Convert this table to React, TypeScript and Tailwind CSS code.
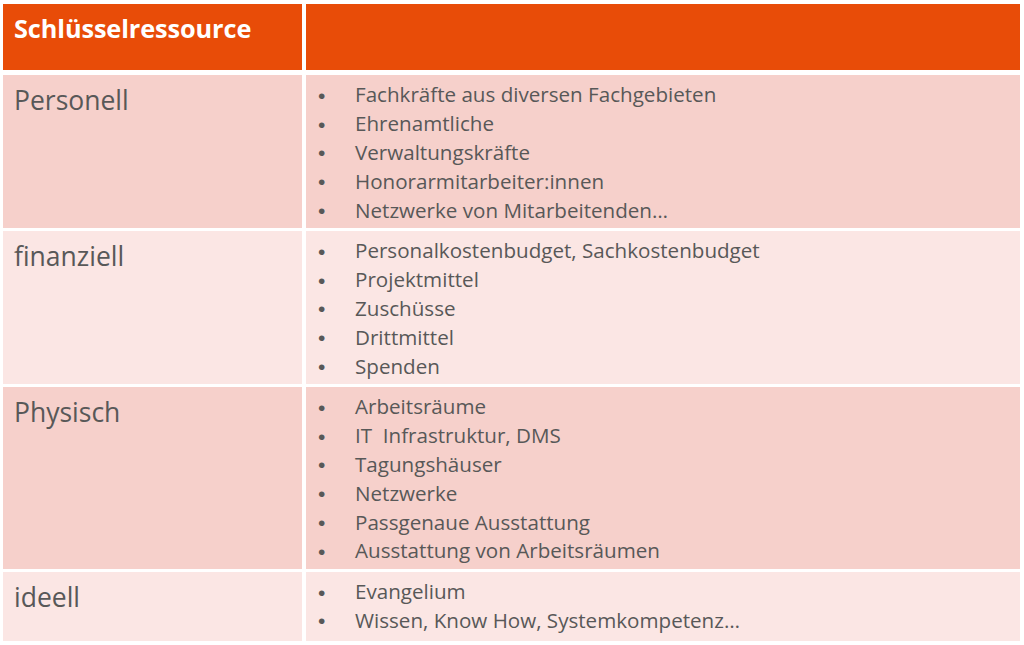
const rows: { label: string; items: string[]; tone: 'dark' | 'light' }[] = [
  {
    label: 'Personell',
    tone: 'dark',
    items: [
      'Fachkräfte aus diversen Fachgebieten',
      'Ehrenamtliche',
      'Verwaltungskräfte',
      'Honorarmitarbeiter:innen',
      'Netzwerke von Mitarbeitenden…',
    ],
  },
  {
    label: 'finanziell',
    tone: 'light',
    items: ['Personalkostenbudget, Sachkostenbudget', 'Projektmittel', 'Zuschüsse', 'Drittmittel', 'Spenden'],
  },
  {
    label: 'Physisch',
    tone: 'dark',
    items: [
      'Arbeitsräume',
      'IT  Infrastruktur, DMS',
      'Tagungshäuser',
      'Netzwerke',
      'Passgenaue Ausstattung',
      'Ausstattung von Arbeitsräumen',
    ],
  },
  {
    label: 'ideell',
    tone: 'light',
    items: ['Evangelium', 'Wissen, Know How, Systemkompetenz…'],
  },
];

export default function App() {
  return (
    <div className="w-[1024px] h-[645px] bg-white pt-[4px] pl-[3px] pr-[4px] font-['Open_Sans','Liberation_Sans',sans-serif] text-[#585858]">
      {/* header */}
      <div className="grid grid-cols-[299px_1fr] gap-x-[4px]">
        <div className="h-[66px] bg-[#e84c08] pl-[11px] pt-[8px] text-[25.3px] font-bold text-white leading-[32px] tracking-[-0.1px]">
          Schlüsselressource
        </div>
        <div className="h-[66px] bg-[#e84c08]" />
      </div>
      <div className="mt-[5px] flex flex-col gap-y-[3px]">
        {rows.map((r) => {
          const bg = r.tone === 'dark' ? 'bg-[#f6d0cb]' : 'bg-[#fbe6e4]';
          return (
            <div key={r.label} className="grid grid-cols-[299px_1fr] gap-x-[4px] min-h-[69px]">
              <div className={`${bg} pl-[11px] pt-[8px] text-[26.5px] leading-[34px]`}>{r.label}</div>
              <ul className={`${bg} pt-[6px] pb-[3px]`}>
                {r.items.map((it) => (
                  <li key={it} className="flex items-center h-[28.8px] text-[20.6px] whitespace-pre">
                    <span className="w-[49px] pl-[12px] font-['Liberation_Sans',sans-serif] text-[21px] leading-none">•</span>
                    <span className="-mt-[1px]">{it}</span>
                  </li>
                ))}
              </ul>
            </div>
          );
        })}
      </div>
    </div>
  );
}
